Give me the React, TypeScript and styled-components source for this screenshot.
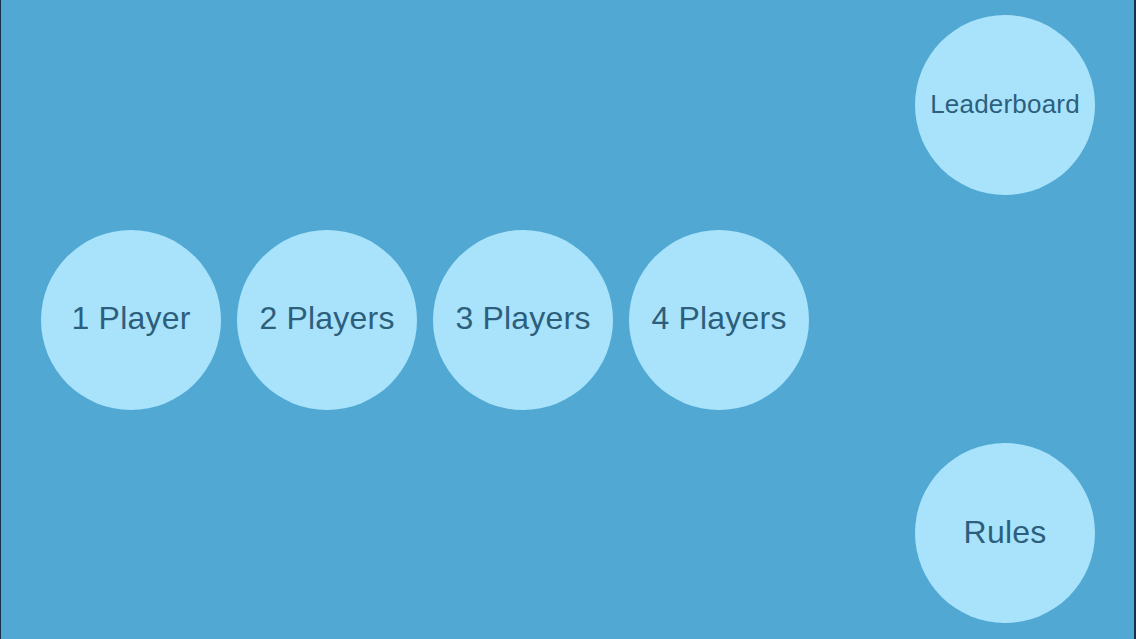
import styled, { createGlobalStyle } from "styled-components";

const GlobalStyle = createGlobalStyle`
  html, body {
    margin: 0;
    padding: 0;
    background: #0f2a45;
  }
  * { box-sizing: border-box; }
`

const Screen = styled.div`
  width: 1136px;
  height: 639px;
  display: flex;
  justify-content: space-between;
  background-color: #50a8d3;
  border-left: 1px solid #15304d;
  border-right: 2px solid #15304d;
  overflow: hidden;
  font-family: "Liberation Sans", Arial, sans-serif;
`
const PlayerRow = styled.div`
  display: flex;
  align-items: center;
  gap: 16px;
  padding-left: 40px;
`
const SideColumn = styled.div`
  display: flex;
  flex-direction: column;
  justify-content: space-between;
  padding: 15px 39px 16px 0;
`
const Bubble = styled.button<{ $size?: number }>`
  width: 180px;
  height: 180px;
  border-radius: 50%;
  border: none;
  padding: 0 0 2px;
  display: flex;
  align-items: center;
  justify-content: center;
  background-color: #a9e3fb;
  color: #2d5f7d;
  font-family: inherit;
  font-size: ${props => props.$size ?? 32}px;
  letter-spacing: 0.2px;
  cursor: pointer;
  white-space: nowrap;
`

const modes = ["1 Player", "2 Players", "3 Players", "4 Players"];

function App() {
  return (
    <>
      <GlobalStyle />
      <Screen>
        <PlayerRow>
          {modes.map((label) => (
            <Bubble key={label}>{label}</Bubble>
          ))}
        </PlayerRow>
        <SideColumn>
          <Bubble $size={26}>Leaderboard</Bubble>
          <Bubble>Rules</Bubble>
        </SideColumn>
      </Screen>
    </>
  )
}
export default App;
